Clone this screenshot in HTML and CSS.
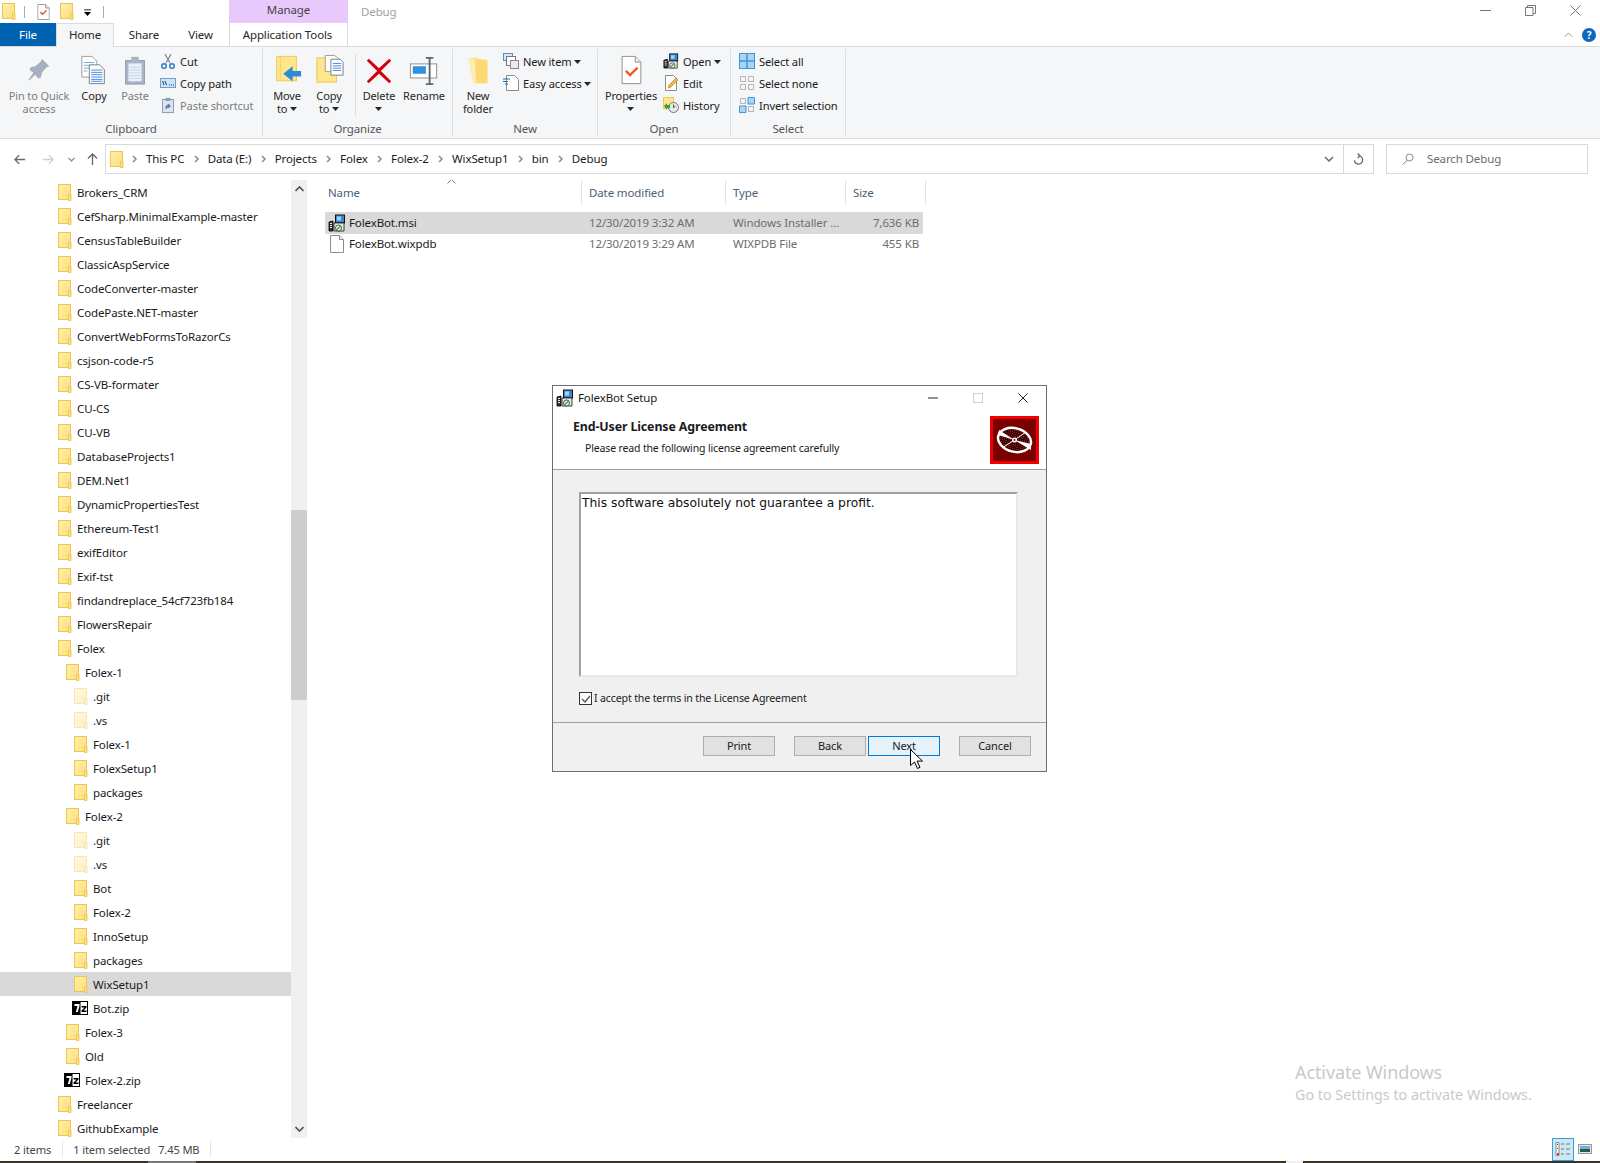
FILE: index.html
```html
<!DOCTYPE html>
<html lang="en">
<head>
<meta charset="utf-8">
<title>Debug</title>
<link rel="stylesheet" href="styles.css">
</head>
<body>
<svg class="defs" width="0" height="0" aria-hidden="true">
  <defs>
    <linearGradient id="fg" x1="0" y1="0" x2="1" y2="1"><stop offset="0" stop-color="#fff0b0"/><stop offset="1" stop-color="#fcdc78"/></linearGradient>
    <symbol id="folder" viewBox="0 0 14 17">
      <rect x=".5" y=".5" width="12" height="15" fill="url(#fg)" stroke="#eec650"/>
      <path d="M10.5 10.5h2.500v6h-2.500z" fill="#fbe08a" stroke="#eec650"/>
    </symbol>
    <symbol id="zip" viewBox="0 0 16 14">
      <rect x=".5" y=".5" width="15" height="13" fill="#fff" stroke="#000"/>
      <rect x="1" y="1" width="7.500" height="12" fill="#000"/>
      <path d="M2.500 3h5v1.800L5.800 11H3.900l1.600-6h-3z" fill="#fff"/>
      <path d="M9.500 5h5v1.500l-3 3h3V11h-5V9.500l3-3h-3z" fill="#000"/>
    </symbol>
    <symbol id="msi" viewBox="0 0 18 18">
      <path d="M1 8l4-1v10H1z" fill="#333" stroke="#000" stroke-width=".8"/>
      <path d="M2 9.500h2M2 11.500h2M2 13.500h2" stroke="#eee"/>
      <rect x="7.500" y="1" width="9" height="8" fill="#3c86d8" stroke="#111"/>
      <rect x="9" y="2.500" width="4" height="4" fill="#9fd4f5"/>
      <path d="M6 9h10v8H6z" fill="#e8e8e8" stroke="#111" stroke-width=".8"/>
      <circle cx="10.500" cy="14" r="3" fill="#f2f2f2" stroke="#111" stroke-width=".7"/>
      <path d="M10.500 14l-2.200 2M10.500 14l2.200-2" stroke="#36b24a" stroke-width="1.600"/>
    </symbol>
    <symbol id="doc" viewBox="0 0 14 18">
      <path d="M.5.500h9l4 4v13H.5z" fill="#fff" stroke="#8c8c8c"/>
      <path d="M9.500.500v4h4" fill="#eee" stroke="#8c8c8c"/>
    </symbol>
    <symbol id="chev" viewBox="0 0 6 8"><path d="M1 1l3 3-3 3" fill="none" stroke="#8c8c8c" stroke-width="1.500"/></symbol>
    <symbol id="caret" viewBox="0 0 7 4"><path d="M0 0h7L3.500 4z" fill="#262626"/></symbol>
    <pattern id="dots" width="2" height="2" patternUnits="userSpaceOnUse"><rect width="2" height="2" fill="#1c0000"/><rect width="1" height="1" fill="#e02020"/></pattern>
  </defs>
</svg>

<header class="titlebar">
  <div class="qat">
    <svg class="ic-folder qat-a"><use href="#folder"/></svg>
    <span class="qat-sep"></span>
    <svg class="qat-doc" viewBox="0 0 14 18"><use href="#doc"/><path d="M3.500 9l2.500 2.500 4.500-4.500" fill="none" stroke="#e8562a" stroke-width="1.500"/></svg>
    <svg class="ic-folder qat-b"><use href="#folder"/></svg>
    <svg class="qat-down" viewBox="0 0 8 8"><path d="M0 1h8" stroke="#000"/><path d="M0 3.500h8L4 8z" fill="#000"/></svg>
    <span class="qat-sep"></span>
  </div>
  <div class="ctx-head">Manage</div>
  <div class="wintitle">Debug</div>
  <div class="winbtns">
    <svg class="wb" viewBox="0 0 11 11"><path d="M0 5.500h11" stroke="#777"/></svg>
    <svg class="wb" viewBox="0 0 11 11"><path d="M.5 2.500h7.500v8H.5zM2.500 2.500V.5h8v8H8" fill="none" stroke="#777"/></svg>
    <svg class="wb" viewBox="0 0 11 11"><path d="M.5.500l10 10M10.500.500l-10 10" stroke="#777"/></svg>
  </div>
</header>

<nav class="tabs">
  <div class="tab tab-file">File</div>
  <div class="tab tab-home">Home</div>
  <div class="tab tab-share">Share</div>
  <div class="tab tab-view">View</div>
  <div class="tab tab-app">Application Tools</div>
  <div class="tabs-right">
    <svg class="collapse" viewBox="0 0 9 6"><path d="M.5 5l4-4 4 4" fill="none" stroke="#999"/></svg>
    <span class="help">?</span>
  </div>
</nav>

<section class="ribbon">
  <div class="group g-clip">
    <div class="group-body">
      <div class="big w-pin dim">
        <svg class="big-ic" viewBox="0 0 32 32"><path d="M19 4l8 8-3 1-5 6-1 5-3 1-3-4-6 6-1-1 5-7-4-3 1-3 5-1 6-5z" fill="#a4b0c0"/></svg>
        <span>Pin to Quick<br>access</span>
      </div>
      <div class="big w-copy">
        <svg class="big-ic" viewBox="0 0 32 32"><path d="M3 1.500h11l5 5v17H3z" fill="#fff" stroke="#9a9a9a"/><path d="M5 8h11M5 11h11M5 14h11M5 17h4" stroke="#6fa8dc"/><path d="M11 10.500h11l5 5v15H11z" fill="#fff" stroke="#7a7a7a"/><path d="M13 16h12M13 18.500h12M13 21h12M13 23.500h12M13 26h12M13 28h12" stroke="#3a86e0"/></svg>
        <span>Copy</span>
      </div>
      <div class="big w-paste dim">
        <svg class="big-ic" viewBox="0 0 32 32"><rect x="6" y="6" width="20" height="25" fill="#a9b6c8" stroke="#8a97a8"/><rect x="9" y="9" width="14" height="19" fill="#eaf0f8"/><rect x="12" y="2" width="8" height="6" fill="#a9b6c8"/><path d="M10 13h12M10 16h12M10 19h12M10 22h12M10 25h12" stroke="#c3d3e8"/></svg>
        <span>Paste</span>
      </div>
      <div class="smalls">
        <div class="small"><svg class="sm-ic" viewBox="0 0 16 16"><path d="M5 1l5 9M11 1L6 10" stroke="#7f8a97" stroke-width="1.300"/><circle cx="4" cy="13" r="2.300" fill="none" stroke="#2a78c8" stroke-width="1.400"/><circle cx="12" cy="13" r="2.300" fill="none" stroke="#2a78c8" stroke-width="1.400"/></svg><span>Cut</span></div>
        <div class="small"><svg class="sm-ic" viewBox="0 0 16 16"><rect x=".5" y="3.500" width="15" height="9" fill="#cfe4f7" stroke="#6d9ecf"/><path d="M2.500 6l1.500 4M5 6l1.500 4" stroke="#1f3a5c"/><path d="M9 10h1M11 10h1M13 10h1" stroke="#1f3a5c"/></svg><span>Copy path</span></div>
        <div class="small dim"><svg class="sm-ic" viewBox="0 0 16 16"><rect x="2.500" y="2.500" width="11" height="13" fill="#dbe4ef" stroke="#8c9db3"/><rect x="5.500" y="1" width="5" height="3" fill="#8c9db3"/><path d="M6 12V9h3M8 7l2.500 2L8 11z" fill="#5a7ca8" stroke="#5a7ca8"/></svg><span>Paste shortcut</span></div>
      </div>
    </div>
    <div class="group-label">Clipboard</div>
  </div>

  <div class="group g-org">
    <div class="group-body">
      <div class="big w-move">
        <svg class="big-ic" viewBox="0 0 32 32"><path d="M5 1.500h21v26H5z" fill="#fde68c" stroke="#eec650"/><path d="M9 1.500v26" stroke="#f5d26a"/><path d="M31 17h-9v-5L12 20l10 8v-5h9z" fill="#2c8ad8"/></svg>
        <span>Move<br>to <svg class="caret"><use href="#caret"/></svg></span>
      </div>
      <div class="big w-copyto">
        <svg class="big-ic" viewBox="0 0 32 32"><path d="M3 3h21v26H3z" fill="#fde68c" stroke="#eec650"/><path d="M12 .5h10l5 4v13H12z" fill="#fff" stroke="#9a9a9a"/><path d="M18 4.500h10l3 3v14H18z" fill="#fff" stroke="#7a7a7a"/><path d="M20 9h9M20 11.500h9M20 14h9M20 16.500h9" stroke="#3a86e0"/></svg>
        <span>Copy<br>to <svg class="caret"><use href="#caret"/></svg></span>
      </div>
      <div class="vsep"></div>
      <div class="big w-delete">
        <svg class="big-ic" viewBox="0 0 32 32"><path d="M5 4l11 10L27 4l2 2-11 11 11 11-2 2-11-10L5 30l-2-2 11-11L3 6z" fill="#d3000f"/></svg>
        <span>Delete<br><svg class="caret"><use href="#caret"/></svg></span>
      </div>
      <div class="big w-rename">
        <svg class="big-ic" viewBox="0 0 32 32"><rect x="1.500" y="9.500" width="28" height="15" fill="#fff" stroke="#8a8a8a"/><rect x="4" y="12" width="14" height="8" fill="#2f8fe0"/><path d="M18 3h8M22 3v28M18 31h8" stroke="#5f6670" stroke-width="2" fill="none"/></svg>
        <span>Rename</span>
      </div>
    </div>
    <div class="group-label">Organize</div>
  </div>

  <div class="group g-new">
    <div class="group-body">
      <div class="big w-newf">
        <svg class="big-ic" viewBox="0 0 32 32"><path d="M6 3h7l13 3v24H11z" fill="#fde28a"/><path d="M6 3l7 2 1 24-3 1z" fill="#fdeeb0"/><path d="M13 5h13v25H14z" fill="#fcd974"/></svg>
        <span>New<br>folder</span>
      </div>
      <div class="smalls">
        <div class="small"><svg class="sm-ic" viewBox="0 0 16 16"><rect x=".5" y=".5" width="9" height="7" fill="#d5e8f8" stroke="#5d8fbe"/><rect x="3.500" y="3.500" width="9" height="9" fill="#fff" stroke="#777"/><rect x="7.500" y="7.500" width="8" height="8" fill="#f3e4ef" stroke="#888"/></svg><span>New item <svg class="caret"><use href="#caret"/></svg></span></div>
        <div class="small"><svg class="sm-ic" viewBox="0 0 16 16"><path d="M3.500.500h8l4 4v11h-12z" fill="#fff" stroke="#8c8c8c"/><path d="M0 4h7M0 6.500h5M2 9h3" stroke="#1f6fb8"/></svg><span>Easy access <svg class="caret"><use href="#caret"/></svg></span></div>
      </div>
    </div>
    <div class="group-label">New</div>
  </div>

  <div class="group g-open">
    <div class="group-body">
      <div class="big w-prop">
        <svg class="big-ic" viewBox="0 0 32 32"><path d="M6.500 1.500h14l6 6v23h-20z" fill="#fff" stroke="#8c8c8c"/><path d="M20.500 1.500v6h6" fill="#eee" stroke="#8c8c8c"/><path d="M10.500 17l4.500 4.500 8-8" fill="none" stroke="#f0561e" stroke-width="2.500"/></svg>
        <span>Properties<br><svg class="caret"><use href="#caret"/></svg></span>
      </div>
      <div class="smalls">
        <div class="small"><svg class="sm-ic" viewBox="0 0 18 18"><use href="#msi"/></svg><span>Open <svg class="caret"><use href="#caret"/></svg></span></div>
        <div class="small"><svg class="sm-ic" viewBox="0 0 16 16"><path d="M2.500.500h8l3 3v12h-11z" fill="#fff" stroke="#8c8c8c"/><path d="M5 13l1-3 7-7 2 2-7 7z" fill="#f0b840" stroke="#a87a20" stroke-width=".6"/></svg><span>Edit</span></div>
        <div class="small"><svg class="sm-ic" viewBox="0 0 16 16"><rect x=".5" y=".5" width="10" height="11" fill="#fde68c" stroke="#eec650"/><circle cx="10.500" cy="10.500" r="5" fill="#e8e8e8" stroke="#777"/><path d="M10.500 7.500v3l2-1" fill="none" stroke="#555"/><path d="M1 9l3-3v2h3v3H4v2z" fill="#3aa03a"/></svg><span>History</span></div>
      </div>
    </div>
    <div class="group-label">Open</div>
  </div>

  <div class="group g-sel">
    <div class="group-body">
      <div class="smalls">
        <div class="small"><svg class="sm-ic" viewBox="0 0 16 16"><rect x=".5" y=".5" width="15" height="15" fill="#acd4f2" stroke="#3b96dc"/><path d="M8 0v16M0 8h16" stroke="#3b96dc" stroke-width="1.500"/></svg><span>Select all</span></div>
        <div class="small"><svg class="sm-ic" viewBox="0 0 16 16"><path d="M1.500 1.500h5v5h-5zM9.500 1.500h5v5h-5zM1.500 9.500h5v5h-5zM9.500 9.500h5v5h-5z" fill="none" stroke="#b3b3b3"/></svg><span>Select none</span></div>
        <div class="small"><svg class="sm-ic" viewBox="0 0 16 16"><path d="M1.500 1.500h5v5h-5zM9.500 9.500h5v5h-5z" fill="none" stroke="#b3b3b3"/><path d="M9 .5h6.500V7H9zM.5 9H7v6.500H.5z" fill="#acd4f2" stroke="#3b96dc"/></svg><span>Invert selection</span></div>
      </div>
    </div>
    <div class="group-label">Select</div>
  </div>
</section>

<section class="addressrow">
  <svg class="nav-ic" viewBox="0 0 14 12"><path d="M1 6h12M6 1L1 6l5 5" fill="none" stroke="#6a6a6a" stroke-width="1.500"/></svg>
  <svg class="nav-ic fwd" viewBox="0 0 14 12"><path d="M13 6H1M8 1l5 5-5 5" fill="none" stroke="#cfcfcf" stroke-width="1.500"/></svg>
  <svg class="nav-down" viewBox="0 0 7 5"><path d="M.5 1l3 3 3-3" fill="none" stroke="#8a8a8a" stroke-width="1.200"/></svg>
  <svg class="nav-up" viewBox="0 0 12 14"><path d="M6 13V1M1 6l5-5 5 5" fill="none" stroke="#6a6a6a" stroke-width="1.500"/></svg>
  <div class="addr">
    <svg class="ic-folder"><use href="#folder"/></svg>
    <div class="crumbs">
      <svg class="crumb-ch"><use href="#chev"/></svg><span>This PC</span>
      <svg class="crumb-ch"><use href="#chev"/></svg><span>Data (E:)</span>
      <svg class="crumb-ch"><use href="#chev"/></svg><span>Projects</span>
      <svg class="crumb-ch"><use href="#chev"/></svg><span>Folex</span>
      <svg class="crumb-ch"><use href="#chev"/></svg><span>Folex-2</span>
      <svg class="crumb-ch"><use href="#chev"/></svg><span>WixSetup1</span>
      <svg class="crumb-ch"><use href="#chev"/></svg><span>bin</span>
      <svg class="crumb-ch"><use href="#chev"/></svg><span>Debug</span>
    </div>
    <svg class="addr-down" viewBox="0 0 10 6"><path d="M1 1l4 4 4-4" fill="none" stroke="#6a6a6a" stroke-width="1.500"/></svg>
    <div class="addr-refresh"><svg viewBox="0 0 12 14" width="11" height="13"><path d="M6 3a4.500 4.500 0 1 1-4.500 5M5 .5L7.500 3 5 5.500" fill="none" stroke="#6a6a6a" stroke-width="1.500"/></svg></div>
  </div>
  <div class="search">
    <svg viewBox="0 0 12 12" width="12" height="12"><circle cx="7.500" cy="4.500" r="3.500" fill="none" stroke="#8a8a8a"/><path d="M5 7.500L.5 11.500" stroke="#8a8a8a"/></svg>
    <span>Search Debug</span>
  </div>
</section>

<main class="main">
  <aside class="tree">
    <div class="row l1"><svg class="ic-folder"><use href="#folder"/></svg><span>Brokers_CRM</span></div>
    <div class="row l1"><svg class="ic-folder"><use href="#folder"/></svg><span>CefSharp.MinimalExample-master</span></div>
    <div class="row l1"><svg class="ic-folder"><use href="#folder"/></svg><span>CensusTableBuilder</span></div>
    <div class="row l1"><svg class="ic-folder"><use href="#folder"/></svg><span>ClassicAspService</span></div>
    <div class="row l1"><svg class="ic-folder"><use href="#folder"/></svg><span>CodeConverter-master</span></div>
    <div class="row l1"><svg class="ic-folder"><use href="#folder"/></svg><span>CodePaste.NET-master</span></div>
    <div class="row l1"><svg class="ic-folder"><use href="#folder"/></svg><span>ConvertWebFormsToRazorCs</span></div>
    <div class="row l1"><svg class="ic-folder"><use href="#folder"/></svg><span>csjson-code-r5</span></div>
    <div class="row l1"><svg class="ic-folder"><use href="#folder"/></svg><span>CS-VB-formater</span></div>
    <div class="row l1"><svg class="ic-folder"><use href="#folder"/></svg><span>CU-CS</span></div>
    <div class="row l1"><svg class="ic-folder"><use href="#folder"/></svg><span>CU-VB</span></div>
    <div class="row l1"><svg class="ic-folder"><use href="#folder"/></svg><span>DatabaseProjects1</span></div>
    <div class="row l1"><svg class="ic-folder"><use href="#folder"/></svg><span>DEM.Net1</span></div>
    <div class="row l1"><svg class="ic-folder"><use href="#folder"/></svg><span>DynamicPropertiesTest</span></div>
    <div class="row l1"><svg class="ic-folder"><use href="#folder"/></svg><span>Ethereum-Test1</span></div>
    <div class="row l1"><svg class="ic-folder"><use href="#folder"/></svg><span>exifEditor</span></div>
    <div class="row l1"><svg class="ic-folder"><use href="#folder"/></svg><span>Exif-tst</span></div>
    <div class="row l1"><svg class="ic-folder"><use href="#folder"/></svg><span>findandreplace_54cf723fb184</span></div>
    <div class="row l1"><svg class="ic-folder"><use href="#folder"/></svg><span>FlowersRepair</span></div>
    <div class="row l1"><svg class="ic-folder"><use href="#folder"/></svg><span>Folex</span></div>
    <div class="row l2"><svg class="ic-folder"><use href="#folder"/></svg><span>Folex-1</span></div>
    <div class="row l3"><svg class="ic-folder faded"><use href="#folder"/></svg><span>.git</span></div>
    <div class="row l3"><svg class="ic-folder faded"><use href="#folder"/></svg><span>.vs</span></div>
    <div class="row l3"><svg class="ic-folder"><use href="#folder"/></svg><span>Folex-1</span></div>
    <div class="row l3"><svg class="ic-folder"><use href="#folder"/></svg><span>FolexSetup1</span></div>
    <div class="row l3"><svg class="ic-folder"><use href="#folder"/></svg><span>packages</span></div>
    <div class="row l2"><svg class="ic-folder"><use href="#folder"/></svg><span>Folex-2</span></div>
    <div class="row l3"><svg class="ic-folder faded"><use href="#folder"/></svg><span>.git</span></div>
    <div class="row l3"><svg class="ic-folder faded"><use href="#folder"/></svg><span>.vs</span></div>
    <div class="row l3"><svg class="ic-folder"><use href="#folder"/></svg><span>Bot</span></div>
    <div class="row l3"><svg class="ic-folder"><use href="#folder"/></svg><span>Folex-2</span></div>
    <div class="row l3"><svg class="ic-folder"><use href="#folder"/></svg><span>InnoSetup</span></div>
    <div class="row l3"><svg class="ic-folder"><use href="#folder"/></svg><span>packages</span></div>
    <div class="row l3 selected"><svg class="ic-folder"><use href="#folder"/></svg><span>WixSetup1</span></div>
    <div class="row l3 zipr"><svg class="ic-zip"><use href="#zip"/></svg><span>Bot.zip</span></div>
    <div class="row l2"><svg class="ic-folder"><use href="#folder"/></svg><span>Folex-3</span></div>
    <div class="row l2"><svg class="ic-folder"><use href="#folder"/></svg><span>Old</span></div>
    <div class="row l2 zipr"><svg class="ic-zip"><use href="#zip"/></svg><span>Folex-2.zip</span></div>
    <div class="row l1"><svg class="ic-folder"><use href="#folder"/></svg><span>Freelancer</span></div>
    <div class="row l1"><svg class="ic-folder"><use href="#folder"/></svg><span>GithubExample</span></div>
  </aside>
  <div class="scrollbar">
    <svg class="sb-arrow" viewBox="0 0 9 6"><path d="M.5 5l4-4 4 4" fill="none" stroke="#505050" stroke-width="1.600"/></svg>
    <div class="sb-track"><div class="sb-thumb"></div></div>
    <svg class="sb-arrow" viewBox="0 0 9 6"><path d="M.5 1l4 4 4-4" fill="none" stroke="#505050" stroke-width="1.600"/></svg>
  </div>
  <div class="files">
    <div class="fhead">
      <div class="c-name">Name</div>
      <div class="c-date">Date modified</div>
      <div class="c-type">Type</div>
      <div class="c-size">Size</div>
      <svg class="sort" viewBox="0 0 9 5"><path d="M.5 4.500l4-4 4 4" fill="none" stroke="#7a7a7a"/></svg>
    </div>
    <div class="frow selected">
      <div class="c-name"><svg class="ficon"><use href="#msi"/></svg><span>FolexBot.msi</span></div>
      <div class="c-date">12/30/2019 3:32 AM</div>
      <div class="c-type">Windows Installer ...</div>
      <div class="c-size">7,636 KB</div>
    </div>
    <div class="frow">
      <div class="c-name"><svg class="ficon doc"><use href="#doc"/></svg><span>FolexBot.wixpdb</span></div>
      <div class="c-date">12/30/2019 3:29 AM</div>
      <div class="c-type">WIXPDB File</div>
      <div class="c-size">455 KB</div>
    </div>
  </div>
</main>

<footer class="status">
  <span class="st-a">2 items</span>
  <span class="st-sep"></span>
  <span class="st-b">1 item selected</span>
  <span class="st-c">7.45 MB</span>
  <span class="st-sep"></span>
  <div class="views">
    <div class="view on"><svg viewBox="0 0 16 16" width="16" height="16"><path d="M1 1.500h3v13H1z" fill="#fff" stroke="#888"/><rect x="2" y="3" width="1" height="1" fill="#555"/><rect x="2" y="7" width="1" height="1" fill="#555"/><rect x="2" y="12" width="2" height="2" fill="#d33"/><path d="M6 3h3M11 3h4M6 8h3M11 8h4M6 13h3M11 13h4" stroke="#777"/></svg></div>
    <div class="view"><svg viewBox="0 0 14 10" width="14" height="10"><rect x=".5" y=".5" width="13" height="9" fill="#dbeaf5" stroke="#999"/><rect x="2" y="2" width="10" height="3" fill="#6fb2e0"/><rect x="2" y="5" width="10" height="3" fill="#2d5a3a"/></svg></div>
  </div>
</footer>
<div class="taskstrip"><span class="ts-a"></span><span class="ts-b"></span></div>

<div class="watermark">
  <div class="wm-1">Activate Windows</div>
  <div class="wm-2">Go to Settings to activate Windows.</div>
</div>

<section class="dialog">
  <div class="dlg-title">
    <svg class="dlg-icon"><use href="#msi"/></svg>
    <span class="dlg-name">FolexBot Setup</span>
    <svg class="dlg-btn" viewBox="0 0 11 11"><path d="M0 5.500h11" stroke="#111"/></svg>
    <svg class="dlg-btn" viewBox="0 0 11 11"><rect x=".5" y=".5" width="10" height="10" fill="none" stroke="#ccc"/></svg>
    <svg class="dlg-btn" viewBox="0 0 11 11"><path d="M.5.500l10 10M10.500.500l-10 10" stroke="#111"/></svg>
  </div>
  <div class="dlg-head">
    <div class="dlg-headtext">
      <div class="dlg-h1">End-User License Agreement</div>
      <div class="dlg-h2">Please read the following license agreement carefully</div>
    </div>
    <svg class="dlg-logo" viewBox="0 0 49 48">
      <rect x="1.500" y="1.500" width="46" height="45" fill="#7a0000" stroke="#f00000" stroke-width="3"/>
      <g transform="rotate(14 24.500 24)">
        <ellipse cx="24.500" cy="24" rx="18" ry="13" fill="#fff"/>
        <ellipse cx="24.500" cy="24" rx="15.500" ry="10.500" fill="url(#dots)"/>
      </g>
      <path d="M24.500 24L9 14l-1 5zM24.500 24L41 34l0-6z" fill="#fff"/>
      <path d="M24.500 24L12 32M24.500 24L36 16" stroke="#fff"/>
      <circle cx="24.500" cy="24" r="2.500" fill="#fff"/>
      <circle cx="24.500" cy="24" r="1" fill="#7a0000"/>
    </svg>
  </div>
  <div class="dlg-body">
    <div class="dlg-text">This software absolutely not guarantee a profit.</div>
    <div class="dlg-check">
      <span class="cb"><svg viewBox="0 0 12 12" width="12" height="12"><path d="M2 6l3 3 5-6" fill="none" stroke="#555" stroke-width="1.300"/></svg></span>
      <span>I accept the terms in the License Agreement</span>
    </div>
  </div>
  <div class="dlg-foot">
    <div class="btn b-print">Print</div>
    <div class="btn b-back">Back</div>
    <div class="btn b-next">Next</div>
    <div class="btn b-cancel">Cancel</div>
  </div>
</section>

<svg class="cursor" viewBox="0 0 13 20"><path d="M.5.500v16l4-3.500 3 6.500 2.500-1.200-3-6.200h5.500z" fill="#fff" stroke="#000"/></svg>
</body>
</html>
```
FILE: styles.css
```css
* { box-sizing: border-box; }
html, body { margin: 0; padding: 0; }
body {
  width: 1600px; height: 1163px; overflow: hidden; position: relative;
  display: flex; flex-direction: column;
  font-family: "Noto Sans", "Open Sans", sans-serif;
  font-size: 11.5px; color: #1a1a22; background: #fff;
  letter-spacing: -0.12px;
}
.defs { position: absolute; }
svg { display: block; flex: none; }
.ic-folder { width: 14px; height: 17px; }
.faded { opacity: .42; }
.ic-zip { width: 16px; height: 14px; }

/* Title bar */
.titlebar { height: 23px; display: flex; flex: none; }
.qat { width: 229px; display: flex; align-items: center; padding-left: 2px; }
.qat-a { margin-right: 8px; }
.qat-sep { width: 1px; height: 12px; background: #aaa; }
.qat-doc { width: 13px; height: 16px; margin-left: 12px; }
.qat-b { margin-left: 10px; }
.qat-down { width: 7px; height: 7px; margin: 2px 12px 0 10px; }
.ctx-head { width: 119px; background: #e9c9fb; text-align: center; line-height: 20px; color: #444; }
.wintitle { margin-left: 13px; color: #a0a0a0; line-height: 24px; }
.winbtns { margin-left: auto; display: flex; gap: 34px; padding: 5px 19px 0 0; }
.wb { width: 11px; height: 11px; }

/* Tabs */
.tabs { height: 23px; display: flex; flex: none; position: relative; }
.tab { line-height: 24px; text-align: center; color: #262626; }
.tab-file { width: 56px; background: #0063b1; color: #fff; }
.tab-home { width: 58px; height: 24px; background: #f5f6f7; border: 1px solid #dadbdc; border-bottom: 0; line-height: 22px; position: relative; z-index: 1; }
.tab-share { width: 56px; margin-left: 2px; }
.tab-view { width: 57px; }
.tab-app { width: 119px; border: 1px solid #dadbdc; border-width: 0 1px; background: #fff; padding-right: 2px; }
.tabs-right { margin-left: auto; display: flex; align-items: center; gap: 9px; padding-right: 4px; }
.collapse { width: 9px; height: 6px; }
.help { width: 14px; height: 14px; border-radius: 50%; background: #0a68bd; color: #fff; font-weight: 700; font-size: 10px; line-height: 14px; text-align: center; }

/* Ribbon */
.ribbon {
  height: 93px; flex: none; display: flex; background: #f5f6f7;
  border-top: 1px solid #dadbdc; border-bottom: 1px solid #dadbdc;
  padding-top: 2px;
}
.group { display: flex; flex-direction: column; height: 87px; border-right: 1px solid #dcdddf; }
.g-clip { width: 263px; }
.g-org { width: 190px; }
.g-new { width: 145px; }
.g-open { width: 133px; }
.g-sel { width: 115px; }
.group-body { flex: 1; display: flex; }
.group-label { height: 17px; line-height: 19px; text-align: center; color: #555; }
.big { display: flex; flex-direction: column; align-items: center; text-align: center; line-height: 13px; color: #262626; font-size: 11px; }
.big > span { display: block; margin-top: 3px; }
.big-ic { width: 30px; height: 32px; margin-top: 5px; }
.dim { color: #7d7d7d; }
.caret { display: inline-block; width: 7px; height: 4px; vertical-align: 2px; }
.w-pin { width: 78px; }
.w-copy { width: 30px; margin-left: 1px; }
.w-paste { width: 40px; margin-left: 6px; }
.w-move { width: 42px; margin-left: 3px; }
.w-copyto { width: 42px; }
.vsep { width: 1px; height: 62px; background: #dcdddf; margin: 5px 5px 0 5px; }
.w-delete { width: 36px; }
.w-rename { width: 54px; }
.w-newf { width: 44px; margin-left: 3px; }
.w-prop { width: 62px; margin-left: 2px; }
.smalls { display: flex; flex-direction: column; margin-left: 5px; padding-top: 1px; }
.g-new .smalls { margin-left: 3px; }
.g-open .smalls { margin-left: 1px; }
.g-sel .smalls { margin-left: 8px; }
.small { display: flex; align-items: center; height: 22px; gap: 4px; white-space: nowrap; font-size: 11.100px; }
.sm-ic { width: 16px; height: 16px; }

/* Address */
.addressrow { height: 41px; flex: none; display: flex; align-items: center; position: relative; padding: 0 12px 1px 14px; }
.nav-ic { width: 12px; height: 11px; }
.fwd { margin-left: 16px; }
.nav-down { width: 7px; height: 5px; margin-left: 14px; }
.nav-up { width: 11px; height: 13px; margin-left: 12px; }
.addr { width: 1269px; height: 30px; margin-left: 7px; border: 1px solid #d9d9d9; display: flex; align-items: center; padding-left: 4px; }
.crumbs { display: flex; align-items: center; flex: 1; margin-left: 8px; padding-bottom: 1px; }
.crumbs span { margin-right: 9.300px; }
.crumb-ch { width: 6px; height: 8px; margin-right: 8px; }
.addr-down { width: 10px; height: 6px; margin-right: 9px; }
.addr-refresh { width: 30px; height: 28px; border-left: 1px solid #d9d9d9; display: flex; align-items: center; justify-content: center; }
.search { flex: 1; margin-left: 12px; height: 30px; border: 1px solid #d9d9d9; display: flex; align-items: center; gap: 13px; padding: 0 0 1px 15px; color: #6d6d6d; }

/* Main */
.main { height: 958px; flex: none; display: flex; overflow: hidden; }
.tree { width: 291px; flex: none; overflow: hidden; }
.row { height: 24px; display: flex; align-items: center; gap: 5px; white-space: nowrap; }
.row.l1 { padding-left: 58px; }
.row.l2 { padding-left: 66px; }
.row.l3 { padding-left: 74px; }
.row.l3.zipr { padding-left: 72px; }
.row.l2.zipr { padding-left: 64px; }
.selected { background: #d9d9d9; }
.scrollbar { width: 16px; flex: none; background: #f0f0f0; display: flex; flex-direction: column; align-items: center; }
.sb-arrow { width: 9px; height: 6px; margin: 6px 0; }
.sb-track { flex: 1; width: 100%; padding-top: 312px; }
.sb-thumb { height: 190px; background: #cdcdcd; }
.files { flex: 1; padding-left: 18px; position: relative; }
.fhead { display: flex; height: 25px; width: 602px; line-height: 25px; color: #4c607a; position: relative; margin-bottom: 7px; }
.fhead > div { border-right: 1px solid #e5e5e5; }
.sort { position: absolute; left: 122px; top: -1px; width: 9px; height: 5px; }
.c-name { width: 257px; padding-left: 3px; flex: none; display: flex; align-items: center; gap: 3px; }
.c-date { width: 144px; padding-left: 7px; flex: none; }
.c-type { width: 120px; padding-left: 7px; flex: none; }
.c-size { width: 80px; padding-right: 4px; flex: none; }
.fhead .c-date, .fhead .c-type, .fhead .c-size { padding-left: 7px; }
.frow { display: flex; width: 598px; height: 22px; padding-bottom: 1px; align-items: center; color: #6d6d6d; }
.frow + .frow { padding-bottom: 3px; }
.frow .c-name { color: #1a1a22; }
.frow .c-size { text-align: right; width: 77px; }
.ficon { width: 18px; height: 18px; }
.ficon.doc { width: 14px; height: 18px; margin: 0 2px; }

/* Status */
.status { height: 23px; flex: none; display: flex; align-items: center; color: #444; padding: 0 0 1px 14px; font-size: 11.100px; }
.st-sep { width: 1px; height: 16px; background: #e5e5e5; margin: 0 10px 0 11px; }
.st-c { margin-left: 8px; }
.views { margin-left: auto; display: flex; align-items: center; gap: 4px; padding-right: 8px; height: 23px; }
.view { display: flex; align-items: center; justify-content: center; }
.view.on { width: 22px; height: 23px; background: #cce8f6; border: 1px solid #3a9fd8; }
.taskstrip { height: 3px; flex: none; background: #3a3228; position: relative; display: flex; }
.ts-a { width: 48px; margin-left: 148px; background: #777; }
.ts-b { width: 17px; margin-left: 1090px; background: #efefef; }

/* Watermark */
.watermark { position: absolute; left: 1295px; top: 1059px; color: #c9c9c9; }
.wm-1 { font-size: 18px; line-height: 26px; letter-spacing: -0.1px; }
.wm-2 { font-size: 14.300px; line-height: 20px; letter-spacing: 0; }

/* Dialog */
.dialog { position: absolute; left: 552px; top: 385px; width: 495px; height: 387px; border: 1px solid #6e6e6e; background: #f0f0f0; display: flex; flex-direction: column; }
.dlg-title { height: 24px; flex: none; background: #fff; display: flex; align-items: center; padding-left: 3px; color: #1a1a1a; }
.dlg-icon { width: 18px; height: 18px; }
.dlg-name { margin: 0 auto 2px 4px; }
.dlg-btn { width: 10px; height: 10px; margin-right: 35px; }
.dlg-btn:last-child { margin-right: 18px; }
.dlg-head { height: 60px; flex: none; background: #fff; display: flex; justify-content: space-between; padding-right: 7px; border-bottom: 1px solid #a0a0a0; }
.dlg-h1 { font-weight: 700; font-size: 12.400px; margin: 8px 0 0 20px; line-height: 17px; }
.dlg-h2 { font-size: 10.500px; letter-spacing: -0.15px; margin: 6px 0 0 32px; line-height: 15px; }
.dlg-logo { width: 49px; height: 48px; margin-top: 6px; }
.dlg-body { flex: 1; padding: 22px 28px 0 26px; border-bottom: 1px solid #a0a0a0; }
.dlg-text { height: 185px; width: 439px; background: #fff; border: 2px solid; border-color: #a0a0a0 #e8e8e8 #e8e8e8 #a0a0a0; padding: 0 0 0 1px; font-family: "DejaVu Sans", sans-serif; font-size: 12.300px; line-height: 18px; letter-spacing: 0; color: #111; }
.dlg-check { display: flex; align-items: center; margin-top: 14px; gap: 2px; font-size: 10.600px; letter-spacing: -0.15px; }
.cb { width: 13px; height: 13px; border: 1px solid #333; background: #fff; display: block; }
.dlg-foot { height: 48px; flex: none; position: relative; display: flex; align-items: flex-start; padding: 13px 0 0 150px; }
.btn { width: 72px; height: 20px; background: #e1e1e1; border: 1px solid #adadad; text-align: center; font-size: 11px; line-height: 18px; }
.b-back { margin-left: 19px; }
.b-next { margin-left: 2px; background: #e5f1fb; border-color: #0078d7; }
.b-cancel { margin-left: 19px; }
.cursor { position: absolute; left: 910px; top: 749px; width: 13px; height: 20px; }
```
